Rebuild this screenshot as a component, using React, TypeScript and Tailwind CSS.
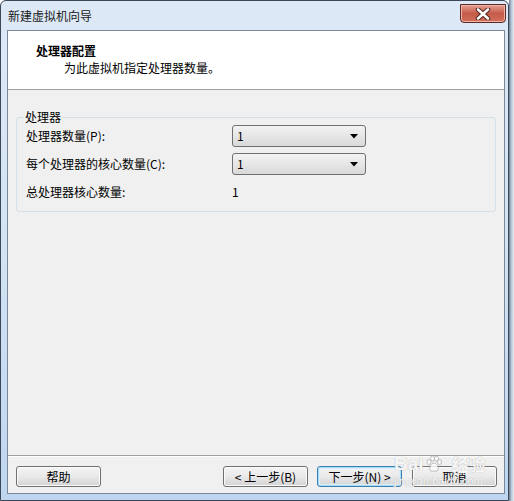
import React from 'react';

const font = "font-['Noto_Sans_CJK_SC','Noto_Sans',sans-serif]";

function Combo({ value }: { value: string }) {
  return (
    <div className="relative h-[22px] w-[134px] rounded-[3px] border border-[#707070] bg-gradient-to-b from-[#f3f3f3] via-[#e6e6e6] to-[#d9d9d9] pl-[4px] text-[12px] leading-[20px] text-black">
      {value}
      <svg className="absolute right-[7px] top-[8px]" width="8" height="5" viewBox="0 0 8 5">
        <path d="M0 0h8L4 4.5z" fill="#000" />
      </svg>
    </div>
  );
}

function Button({ label, focused = false }: { label: string; focused?: boolean }) {
  return (
    <button
      className={
        'h-[21px] w-[85px] rounded-[3px] border bg-gradient-to-b from-[#f4f4f4] via-[#e9e9e9] to-[#d3d3d3] text-[12px] leading-[19px] text-black ' +
        (focused
          ? 'border-[#3c7fb1] shadow-[inset_0_0_0_1px_#a8dcf6,inset_0_0_0_2px_#dbeffb]'
          : 'border-[#707070] shadow-[inset_0_0_0_1px_#fbfbfb]')
      }
    >
      {label}
    </button>
  );
}

export default function App() {
  return (
    <div className={`relative flex h-[501px] w-[514px] bg-white ${font}`}>
      {/* Window */}
      <div className="flex h-full w-[509px] flex-col rounded-t-[6px] border border-[#3b4756] bg-gradient-to-b from-[#dde9f6] via-[#d3e3f4] to-[#bed6f0]">
        {/* Title bar */}
        <div className="flex h-[29px] items-start justify-between">
          <span className="pl-[7px] pt-[7px] text-[12px] leading-[16px] text-[#1a1a1a]">新建虚拟机向导</span>
          <div className="mr-[2px] mt-[3px] flex h-[19px] w-[46px] items-center justify-center rounded-b-[4px] border border-[#5b2a24] bg-gradient-to-b from-[#e3a092] via-[#c65a48] to-[#d2705e] shadow-[inset_0_0_0_1px_#f0b4a8]">
            <svg width="16" height="12" viewBox="0 0 16 12">
              <path d="M3 1.5l10 9M13 1.5l-10 9" stroke="#4a1f1a" strokeWidth="4.5" strokeLinecap="round" />
              <path d="M3 1.5l10 9M13 1.5l-10 9" stroke="#fff" strokeWidth="2.6" strokeLinecap="round" />
            </svg>
          </div>
        </div>

        {/* Client area */}
        <div className="mb-[6px] ml-[6px] mr-[3px] flex flex-1 flex-col border border-[#7a8899] bg-[#f0f0f0]">
          {/* Header */}
          <div className="h-[59px] border-b border-[#a0a0a0] bg-white pl-[28px] pt-[12px] text-[12px] leading-[16px] text-black">
            <div className="font-bold">处理器配置</div>
            <div className="mt-[1px] pl-[28px]">为此虚拟机指定处理器数量。</div>
          </div>

          {/* Body */}
          <div className="flex-1 px-[8px] pt-[19px]">
            <fieldset className="rounded-[3px] border border-[#d5dfe5] pb-[8px] pl-[9px] text-[12px] text-black">
              <legend className="-ml-[2px] px-[1px] leading-[16px]">处理器</legend>
              <div className="grid grid-cols-[206px_134px] gap-y-[6px] leading-[22px]">
                <span>处理器数量(P):</span>
                <Combo value="1" />
                <span>每个处理器的核心数量(C):</span>
                <Combo value="1" />
                <span>总处理器核心数量:</span>
                <span>1</span>
              </div>
            </fieldset>
          </div>

          {/* Footer */}
          <div className="flex h-[38px] items-start justify-between border-t border-[#a0a0a0] pl-[8px] pr-[7px] pt-[10px] shadow-[inset_0_1px_0_#ffffff]">
            <Button label="帮助" />
            <div className="flex gap-[9px]">
              <Button label="< 上一步(B)" />
              <div className="flex gap-[10px]">
                <Button label="下一步(N) >" focused />
                <Button label="取消" />
              </div>
            </div>
          </div>
        </div>
      </div>

      {/* Background behind the window */}
      <div className="flex-1 bg-gradient-to-r from-[#6f7f90] via-[#b8c9dc] to-[#e4ebf2]" />

      {/* Watermark */}
      <div className="pointer-events-none absolute left-[394px] top-[453px] flex flex-col text-white/90 [text-shadow:0_0_1px_#a0a0a0]">
        <div className="flex items-center gap-[1px] font-['Liberation_Sans',sans-serif] text-[19px] font-bold leading-[22px]">
          <span>Bai</span>
          <svg width="18" height="18" viewBox="0 0 18 18" className="opacity-80">
            <g fill="#fff" stroke="#a0a0a0" strokeWidth="0.8">
              <ellipse cx="4" cy="7" rx="2" ry="2.5" />
              <ellipse cx="7.5" cy="3.5" rx="2" ry="2.5" />
              <ellipse cx="11.5" cy="3.5" rx="2" ry="2.5" />
              <ellipse cx="14.5" cy="7" rx="2" ry="2.5" />
              <path d="M9 8c3 0 5 5 4 7-1 2-3 1-4 1s-3 1-4-1c-1-2 1-7 4-7z" />
            </g>
          </svg>
          <span className={`${font} ml-[8px] text-[17px]`}>经验</span>
        </div>
        <div className="font-['Liberation_Sans',sans-serif] text-[11px] leading-[12px]">jingyan.baidu.com</div>
      </div>
    </div>
  );
}
